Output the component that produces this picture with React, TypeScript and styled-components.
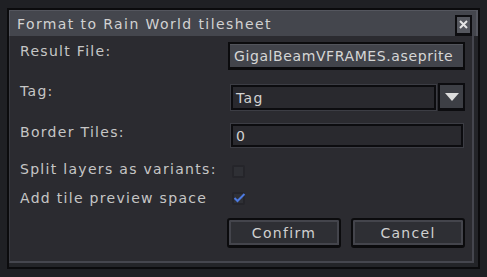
import React from 'react'
import styled, { createGlobalStyle } from 'styled-components'

const GlobalStyle = createGlobalStyle`
  html, body {
    margin: 0;
    padding: 0;
    background: #1f2024;
  }
  body {
    font-family: "DejaVu Sans", "Liberation Sans", sans-serif;
    font-size: 14px;
    color: #c6c6c6;
  }
`

const Window = styled.div`
  box-sizing: border-box;
  margin: 8px 0 0 7px;
  width: 473px;
  height: 261px;
  border: 2px solid #0b0b0d;
  background: #232428;
  display: flex;
  flex-direction: column;
`

const TitleBar = styled.div`
  box-sizing: border-box;
  height: 26px;
  flex: none;
  display: flex;
  align-items: center;
  justify-content: space-between;
  padding: 0 4px 0 7px;
  background: #44464d;
  border-top: 1px solid #54565e;
  border-left: 1px solid #54565e;
  border-right: 2px solid #54565e;
`

const Title = styled.span`
  color: #d2d2d2;
  letter-spacing: 1.4px;
  line-height: 16px;
`

const CloseButton = styled.div`
  box-sizing: border-box;
  width: 17px;
  height: 21px;
  margin-top: 3px;
  border: 2px solid #0d0d10;
  border-bottom-width: 3px;
  background: #55575e;
  display: flex;
  align-items: center;
  justify-content: center;
`

const Frame = styled.div`
  flex: 1;
  margin: 0 4px 4px 0;
  background: #2b2b30;
  border-left: 1px solid #3a3b41;
  border-right: 2px solid #45464e;
  border-bottom: 2px solid #45464e;
  padding: 6px 0 0 10px;
  display: grid;
  grid-template-columns: 208px 237px;
  grid-template-rows: 28px 28px 23px 16px 16px 30px;
  row-gap: 13px;
`

const Label = styled.div<{ $top?: number }>`
  letter-spacing: 1.3px;
  line-height: 16px;
  margin-top: ${p => p.$top ?? 0}px;
  white-space: nowrap;
`

const FileButton = styled.div`
  box-sizing: border-box;
  height: 28px;
  border: 2px solid #0b0b0d;
  border-bottom-width: 3px;
  background: #42444b;
  box-shadow: inset 0 1px 0 #52545b;
  color: #d6d6d6;
  letter-spacing: 0.6px;
  padding: 0 4px;
  display: flex;
  align-items: center;
  overflow: hidden;
  white-space: nowrap;
`

const Combo = styled.div`
  display: flex;
  height: 28px;
`

const Field = styled.div<{ $h: number; $top?: number }>`
  box-sizing: border-box;
  flex: 1;
  height: ${p => p.$h}px;
  margin: ${p => p.$top ?? 0}px 2px 0 3px;
  background: #29292e;
  border: 2px solid #0c0c0f;
  outline: 1px solid #3c3d44;
  letter-spacing: 1.3px;
  color: #d2d2d2;
  padding: 0 3px;
  display: flex;
  align-items: center;
`

const DropButton = styled.div`
  box-sizing: border-box;
  width: 27px;
  height: 28px;
  border: 2px solid #0c0c0f;
  border-bottom-width: 3px;
  background: #3d3f45;
  display: flex;
  align-items: center;
  justify-content: center;
`

const Check = styled.div<{ $checked?: boolean }>`
  box-sizing: border-box;
  width: 13px;
  height: 13px;
  margin: ${p => (p.$checked ? '3px' : '5px')} 0 0 4px;
  border: 2px solid #25252a;
  border-radius: 2px;
  background: #2f3035;
  position: relative;
`

const Tick = styled.svg`
  position: absolute;
  left: -1px;
  top: -2px;
`

const ButtonRow = styled.div`
  grid-column: 2;
  display: flex;
  gap: 10px;
  margin-left: -1px;
`

const Button = styled.div`
  box-sizing: border-box;
  width: 115px;
  height: 30px;
  border: 2px solid #0b0b0d;
  border-bottom-width: 3px;
  border-radius: 3px;
  background: #2e2f34;
  box-shadow: inset 0 0 0 2px #44454c;
  color: #d0d0d0;
  letter-spacing: 1.3px;
  display: flex;
  align-items: center;
  justify-content: center;
`

export default function App() {
  return (
    <>
      <GlobalStyle />
      <Window>
        <TitleBar>
          <Title>Format to Rain World tilesheet</Title>
          <CloseButton>
            <svg width="9" height="9" viewBox="0 0 9 9">
              <path d="M1 1 L8 8 M8 1 L1 8" stroke="#e6e6e6" strokeWidth="2" />
            </svg>
          </CloseButton>
        </TitleBar>
        <Frame>
          <Label $top={1}>Result File:</Label>
          <FileButton>GigalBeamVFRAMES.aseprite</FileButton>

          <Label $top={0}>Tag:</Label>
          <Combo>
            <Field $h={25} $top={2}>Tag</Field>
            <DropButton>
              <svg width="14" height="8" viewBox="0 0 14 8">
                <path d="M0 0 H14 L7 8 Z" fill="#dcdcdc" />
              </svg>
            </DropButton>
          </Combo>

          <Label $top={0}>Border Tiles:</Label>
          <Field $h={23}>0</Field>

          <Label $top={1}>Split layers as variants:</Label>
          <Check />

          <Label $top={1}>Add tile preview space</Label>
          <Check $checked>
            <Tick width="13" height="11" viewBox="0 0 13 11">
              <path d="M1.5 6 L4.5 9 L11.5 2" fill="none" stroke="#4d7ae0" strokeWidth="2" />
            </Tick>
          </Check>

          <ButtonRow>
            <Button>Confirm</Button>
            <Button>Cancel</Button>
          </ButtonRow>
        </Frame>
      </Window>
    </>
  )
}
